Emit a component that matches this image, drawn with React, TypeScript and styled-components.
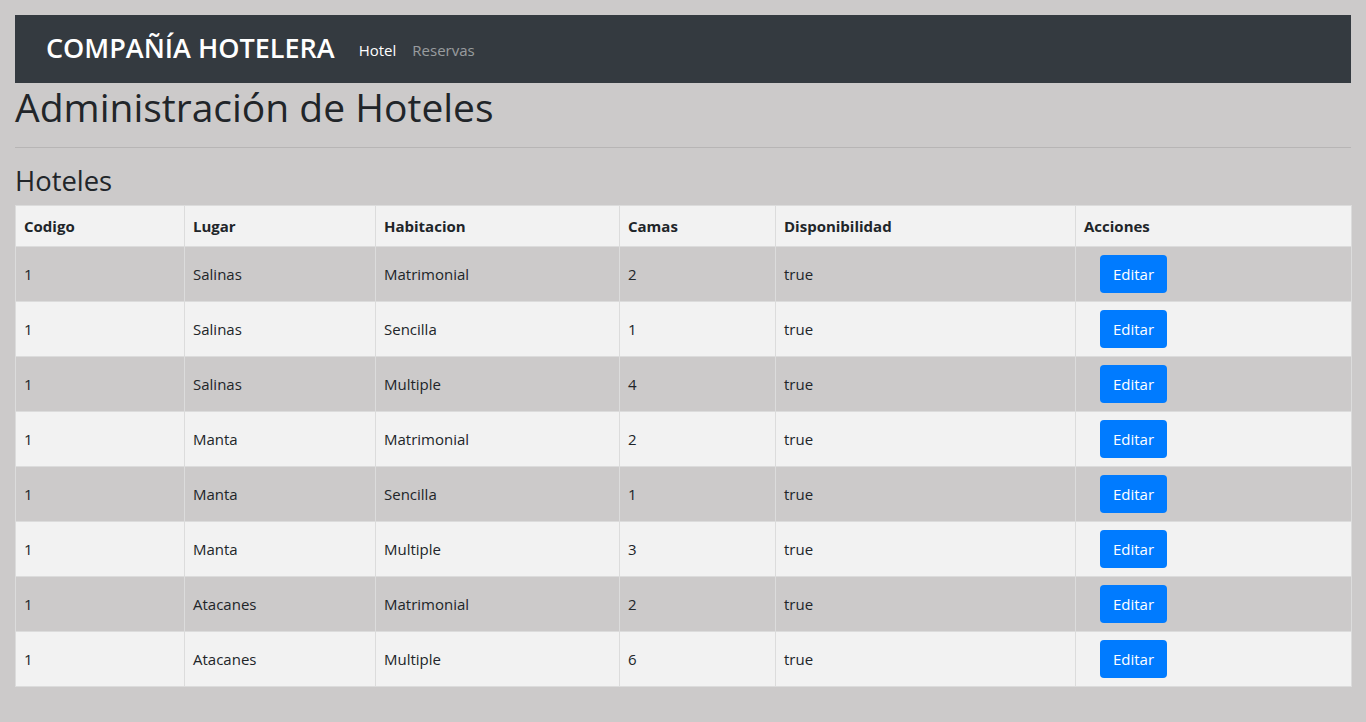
import React from "react";
import styled, { createGlobalStyle } from "styled-components";

const Global = createGlobalStyle`
  html, body { margin: 0; padding: 0; background: #cccaca; }
  body { font-family: "Open Sans", "Noto Sans", sans-serif; color: #212529; }
  * { box-sizing: border-box; }
`;

const Page = styled.div`
  padding: 15px;
  min-height: 722px;
`;

const Navbar = styled.nav`
  background: #343a40;
  height: 68px;
  display: flex;
  align-items: center;
  padding: 0 31px;
  gap: 24px;
`;

const Brand = styled.span`
  color: #fff;
  font-size: 27px;
  font-weight: 600;
  line-height: 1;
  margin-top: -4px;
`;

const NavLinks = styled.div`
  display: flex;
  gap: 16px;
  margin-top: 1px;
`;

const NavLink = styled.a<{ $active?: boolean }>`
  color: ${(p) => (p.$active ? "#ffffff" : "rgba(255,255,255,0.5)")};
  font-size: 15px;
  text-decoration: none;
  line-height: 24px;
`;

const Title = styled.h1`
  margin: 0;
  font-size: 39px;
  font-weight: 500;
  line-height: 48px;
`;

const Rule = styled.hr`
  margin: 16px 0;
  border: 0;
  border-top: 1px solid rgba(0, 0, 0, 0.1);
`;

const Subtitle = styled.h2`
  margin: 0 0 8px;
  font-size: 27.4px;
  font-weight: 500;
  line-height: 33px;
`;

const Table = styled.table`
  width: 100%;
  border-collapse: collapse;
  border: 1px solid #dcdcdc;
  table-layout: fixed;
`;

const HeadCell = styled.th<{ $w: number }>`
  width: ${(p) => p.$w}px;
  text-align: left;
  font-weight: 700;
  font-size: 15px;
  line-height: 24px;
  padding: 8px;
  border: 1px solid #dcdcdc;
  background: #f2f2f2;
`;

const Row = styled.tr<{ $odd: boolean }>`
  background: ${(p) => (p.$odd ? "#cccaca" : "#f2f2f2")};
`;

const Cell = styled.td`
  font-size: 15px;
  line-height: 24px;
  padding: 8px;
  height: 55px;
  border: 1px solid #dcdcdc;
  vertical-align: middle;
`;

const EditButton = styled.button`
  margin-left: 16px;
  width: 67px;
  height: 38px;
  background: #007bff;
  color: #fff;
  border: none;
  border-radius: 4px;
  font-family: "Open Sans", "Noto Sans", sans-serif;
  font-size: 15px;
  cursor: pointer;
  display: block;
`;

const columns: [string, number][] = [
  ["Codigo", 169],
  ["Lugar", 191],
  ["Habitacion", 244],
  ["Camas", 156],
  ["Disponibilidad", 300],
  ["Acciones", 276],
];

const rows = [
  ["1", "Salinas", "Matrimonial", "2", "true"],
  ["1", "Salinas", "Sencilla", "1", "true"],
  ["1", "Salinas", "Multiple", "4", "true"],
  ["1", "Manta", "Matrimonial", "2", "true"],
  ["1", "Manta", "Sencilla", "1", "true"],
  ["1", "Manta", "Multiple", "3", "true"],
  ["1", "Atacanes", "Matrimonial", "2", "true"],
  ["1", "Atacanes", "Multiple", "6", "true"],
];

export default function App() {
  return (
    <>
      <Global />
      <Page>
        <Navbar>
          <Brand>COMPAÑÍA HOTELERA</Brand>
          <NavLinks>
            <NavLink $active>Hotel</NavLink>
            <NavLink>Reservas</NavLink>
          </NavLinks>
        </Navbar>
        <Title>Administración de Hoteles</Title>
        <Rule />
        <Subtitle>Hoteles</Subtitle>
        <Table>
          <thead>
            <tr>
              {columns.map(([c, w]) => (
                <HeadCell key={c} $w={w}>
                  {c}
                </HeadCell>
              ))}
            </tr>
          </thead>
          <tbody>
            {rows.map((r, i) => (
              <Row key={i} $odd={i % 2 === 0}>
                {r.map((v, j) => (
                  <Cell key={j}>{v}</Cell>
                ))}
                <Cell>
                  <EditButton>Editar</EditButton>
                </Cell>
              </Row>
            ))}
          </tbody>
        </Table>
      </Page>
    </>
  );
}
